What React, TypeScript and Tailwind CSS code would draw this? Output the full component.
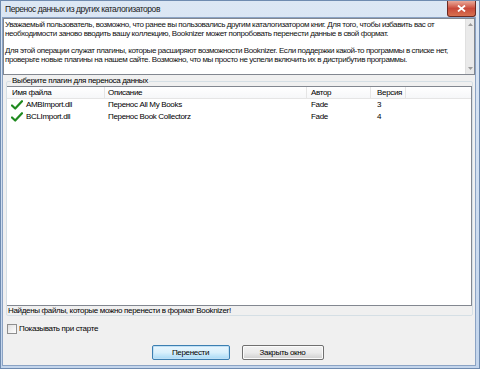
import React from "react";

function Check() {
  return (
    <svg width="12" height="10" viewBox="0 0 12 10" className="shrink-0">
      <path d="M1 5.5 L4.2 8.5 L11 1.2" fill="none" stroke="#1f8a1f" strokeWidth="2.2" strokeLinecap="round" strokeLinejoin="round" />
    </svg>
  );
}

const rows = [
  { file: "AMBImport.dll", desc: "Перенос All My Books", author: "Fade", ver: "3" },
  { file: "BCLImport.dll", desc: "Перенос Book Collectorz", author: "Fade", ver: "4" },
];

export default function App() {
  return (
    <div className="w-[480px] h-[369px] flex flex-col overflow-hidden bg-gradient-to-b from-[#dce7f4] to-[#c3d5ec] border border-[#6f8bb0] font-['Liberation_Sans',Arial,sans-serif] text-black text-[8px] tracking-[-0.33px]">
      {/* title bar */}
      <div className="h-[16px] flex items-start justify-between shrink-0">
        <div className="pl-[4px] pt-[3px] text-[8.5px] tracking-[-0.45px] leading-[10px] text-[#1a1a1a]">Перенос данных из других каталогизаторов</div>
        <div className="mr-[3px] w-[29px] h-[16px] rounded-b-[3px] border border-t-0 border-[#6b2a22] bg-gradient-to-b from-[#e9a99a] via-[#c9493a] to-[#d7704f] flex items-center justify-center">
          <svg width="9" height="7" viewBox="0 0 9 7">
            <path d="M1 0.5 L8 6.5 M8 0.5 L1 6.5" stroke="white" strokeWidth="1.8" />
          </svg>
        </div>
      </div>
      {/* client */}
      <div className="flex-1 ml-[1px] mr-[3px] mb-[2px] bg-[#f0f0f0] border border-[#8ba3c4] flex flex-col">
        {/* text box */}
        <div className="h-[57px] shrink-0 border border-[#828790] bg-white flex">
          <div className="flex-1 min-w-0 pl-[1px] pt-[1px] leading-[9px] text-[#111] tracking-[-0.4px] whitespace-nowrap overflow-hidden">
            <p>
              Уважаемый пользователь, возможно, что ранее вы пользовались другим каталогизатором книг. Для того, чтобы избавить вас от
              <br />
              необходимости заново вводить вашу коллекцию, Booknizer может попробовать перенести данные в свой формат.
            </p>
            <p className="mt-[8px]">
              Для этой операции служат плагины, которые расширяют возможности Booknizer. Если поддержки какой-то программы в списке нет,
              <br />
              проверьте новые плагины на нашем сайте. Возможно, что мы просто не успели включить их в дистрибутив программы.
            </p>
          </div>
          <div className="w-[9px] shrink-0 bg-[#eaeaea] border-l border-[#e0e0e0] flex flex-col justify-between items-center py-[4px]">
            <svg width="5" height="3" viewBox="0 0 5 3"><path d="M0 3 L2.5 0 L5 3 Z" fill="#9a9a9a" /></svg>
            <svg width="5" height="3" viewBox="0 0 5 3"><path d="M0 0 L2.5 3 L5 0 Z" fill="#9a9a9a" /></svg>
          </div>
        </div>
        {/* group box */}
        <fieldset className="mt-[1px] ml-[3px] mr-[2px] shrink-0 border border-[#d5dfe5] rounded-[2px] px-0 pb-0 pt-0">
          <legend className="ml-[4px] px-[1px] leading-[10px]">Выберите плагин для переноса данных</legend>
          <div className="h-[229px] flex flex-col">
            <div className="h-[220px] border border-[#828790] border-l-0 bg-white flex flex-col">
              <div className="h-[12px] flex border-b border-[#e5e5e5] bg-gradient-to-b from-white to-[#f6f7f9] leading-[10px]">
                <div className="w-[98px] pl-[5px] pt-[1px] border-r border-[#e5e5e5]">Имя файла</div>
                <div className="w-[202px] pl-[3px] pt-[1px] border-r border-[#e5e5e5]">Описание</div>
                <div className="w-[64px] pl-[4px] pt-[1px] border-r border-[#e5e5e5]">Автор</div>
                <div className="w-[35px] pl-[6px] pt-[1px] border-r border-[#e5e5e5]">Версия</div>
                <div className="flex-1" />
              </div>
              {rows.map((r) => (
                <div key={r.file} className="h-[12px] flex items-center leading-[10px]">
                  <div className="w-[98px] pl-[4px] flex items-center gap-[3px]">
                    <Check />
                    <span>{r.file}</span>
                  </div>
                  <div className="w-[202px] pl-[3px]">{r.desc}</div>
                  <div className="w-[64px] pl-[4px]">{r.author}</div>
                  <div className="w-[35px] pl-[6px]">{r.ver}</div>
                </div>
              ))}
            </div>
            <div className="h-[9px] pl-[1px] leading-[9px]">Найдены файлы, которые можно перенести в формат Booknizer!</div>
          </div>
        </fieldset>
        {/* checkbox */}
        <div className="mt-[8px] ml-[4px] flex items-center gap-[2px] h-[10px]">
          <div className="w-[10px] h-[10px] border border-[#8f8f8f] bg-gradient-to-br from-[#e0e0e0] to-white" />
          <span>Показывать при старте</span>
        </div>
        {/* buttons */}
        <div className="mt-[11px] flex justify-center gap-[12px] pr-[3px]">
          <button className="w-[78px] h-[15px] rounded-[2px] border border-[#3c7fb1] bg-gradient-to-b from-[#eaf6fd] via-[#d9f0fc] to-[#a7d9f5] leading-[13px] shadow-[inset_0_0_0_1px_#c0e0f5]">Перенести</button>
          <button className="w-[82px] h-[15px] rounded-[2px] border border-[#707070] bg-gradient-to-b from-[#f2f2f2] via-[#ebebeb] to-[#cfcfcf] leading-[13px] shadow-[inset_0_0_0_1px_#fbfbfb]">Закрыть окно</button>
        </div>
      </div>
    </div>
  );
}
